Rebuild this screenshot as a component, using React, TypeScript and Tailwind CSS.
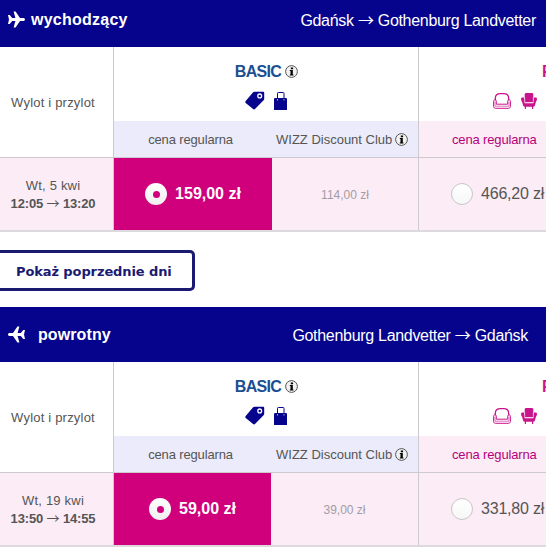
import React from "react";

interface Flight {
  title: string;
  from: string;
  to: string;
  day: string;
  departure: string;
  arrival: string;
  basicPrice: string;
  clubPrice: string;
  plusPrice: string;
}

const outbound: Flight = {
  title: "wychodzący",
  from: "Gdańsk",
  to: "Gothenburg Landvetter",
  day: "Wt, 5 kwi",
  departure: "12:05",
  arrival: "13:20",
  basicPrice: "159,00 zł",
  clubPrice: "114,00 zł",
  plusPrice: "466,20 zł",
};

const inbound: Flight = {
  title: "powrotny",
  from: "Gothenburg Landvetter",
  to: "Gdańsk",
  day: "Wt, 19 kwi",
  departure: "13:50",
  arrival: "14:55",
  basicPrice: "59,00 zł",
  clubPrice: "39,00 zł",
  plusPrice: "331,80 zł",
};

const PlaneIcon: React.FC<{ className?: string }> = ({ className = "" }) => (
  <svg viewBox="0 0 17 17" className={`h-[17px] w-[17px] shrink-0 fill-white ${className}`}>
    <path d="M0 4h1.700l2.500 3h3.200L5.600.4h2L12 7h3.100c1.300 0 1.900.7 1.900 1.500S16.400 10 15.100 10H12l-4.400 6.600h-2L7.400 10H4.200l-2.500 3H0l1-4.500z" />
  </svg>
);

const InfoIcon: React.FC<{ className?: string }> = ({ className = "" }) => (
  <svg viewBox="0 0 13 13" className={`h-[13px] w-[13px] shrink-0 ${className}`}>
    <circle cx="6.5" cy="6.5" r="5.9" fill="#f1f1f1" stroke="#555" strokeWidth="1" />
    <path d="M5.800 2.500h2.300v1.700H5.800zM4.800 5h3v4.500h.7v1.100H4.800V9.500h.7V6h-.7z" fill="#000" />
  </svg>
);

const TagIcon = () => (
  <svg viewBox="0 0 20 19" className="h-[19px] w-5 shrink-0">
    <path
      d="M9.500.8h8.400c.8 0 1.300.5 1.300 1.300v5.600c0 .6-.2 1.100-.6 1.500l-8.600 8.900c-.6.600-1.300.6-1.900 0L.7 12c-.6-.6-.6-1.400 0-2l7.200-8.400c.4-.5.9-.8 1.600-.8z"
      fill="#06038d"
    />
    <circle cx="14.700" cy="4.900" r="1.900" fill="none" stroke="#fff" strokeWidth="1.300" />
  </svg>
);

const BagIcon = () => (
  <svg viewBox="0 0 13 18" className="h-[18px] w-[13px] shrink-0">
    <path d="M3.500 8V1.300c0-.5.300-.8.800-.8h4.900c.5 0 .8.300.8.800V8" fill="none" stroke="#06038d" />
    <path d="M.6 6h11.800l.6 1v11H0V7z" fill="#06038d" />
    <path d="M3 7h1v1.500H3zM9.500 7h1v1.500h-1z" fill="#aaaadd" />
  </svg>
);

const SofaIcon = () => (
  <svg viewBox="0 0 18 16" className="h-4 w-[18px] shrink-0" fill="none" stroke="#c9158b">
    <path d="M2.300 7V5.500C2.300 2.500 4.500.7 7.500.7h3c3 0 5.200 1.800 5.200 4.800V7" strokeWidth="1.300" />
    <path d="M3.300 11.200V8.200C3.300 7.300 2.900 6.800 2 6.800S.6 7.400.6 8.300v5c0 1.300.8 2 2 2h12.800c1.200 0 2-.7 2-2v-5c0-.9-.5-1.500-1.400-1.500s-1.300.5-1.300 1.400v3z" strokeWidth="1" />
    <path d="M2 8.500v4.700h14V8.500" strokeWidth=".6" />
  </svg>
);

const ArmchairIcon = () => (
  <svg viewBox="0 0 16 16" className="h-4 w-4 shrink-0" fill="#c9158b">
    <path d="M5.200 0h5.600c.9 0 1.500.6 1.500 1.500V9H3.700V1.500C3.700.6 4.300 0 5.200 0z" />
    <path d="M1.400 4.500H3l1 5.300h8l1-5.300h1.600c.8 0 1.400.6 1.400 1.300 0 1.700-.7 2.200-1.300 3.700l-.7 2.800c-.3 1-.9 1.400-1.700 1.400H3.700c-.8 0-1.400-.4-1.700-1.400l-.7-2.800C.7 8 0 7.500 0 5.800c0-.7.600-1.300 1.400-1.300z" />
    <path d="M3.700 4.300v5.700h8.600V4.300" fill="none" stroke="#fff" strokeWidth=".5" />
    <path d="M3.800 13h1.200v3H3.800zM11 13h1.200v3H11z" />
  </svg>
);

const Arrow = () => <span className="font-['Noto_Sans_CJK_SC',sans-serif] font-normal leading-none">→</span>;

const Radio: React.FC<{ checked?: boolean }> = ({ checked }) =>
  checked ? (
    <span className="flex size-[22px] shrink-0 items-center justify-center rounded-full bg-linear-to-b from-white to-[#f0f0f0]">
      <span className="size-[7px] rounded-full bg-[#d0007d]" />
    </span>
  ) : (
    <span className="size-[22px] shrink-0 rounded-full border border-[#c8c5c8] bg-linear-to-b from-white to-[#f5f8f6]" />
  );

const FareTable: React.FC<{ flight: Flight; basicWidth: string }> = ({ flight, basicWidth }) => (
  <div className="border-b-2 border-[#dddadd] text-[13px] leading-[18px] text-[#555]">
    <div className="flex h-[111px] border-b border-[#cccacf]">
      <div className="flex w-[114px] shrink-0 items-center justify-center border-r border-[#cccacf] pr-[7px] pt-[2px] tracking-[0.2px]">
        Wylot i przylot
      </div>

      {/* Basic */}
      <div className="flex w-[305px] shrink-0 flex-col border-r border-[#cccacf]">
        <div className="flex h-[74px] flex-col items-center pt-[15px]">
          <div className="flex h-5 items-center gap-1 pl-[1px]">
            <span className="text-base font-bold tracking-[-0.7px] text-[#1a4f92]">BASIC</span>
            <InfoIcon className="mb-[1px]" />
          </div>
          <div className="mt-[9px] flex items-end gap-[9px] pr-[1px]">
            <TagIcon />
            <BagIcon />
          </div>
        </div>
        <div className="flex h-9 items-center bg-[#ebebfb] pt-[2px]">
          <span className="w-[153px] text-center tracking-[-0.15px]">cena regularna</span>
          <span className="flex items-center gap-[3px] pl-[9px]">
            WIZZ Discount Club
            <InfoIcon className="mb-[1px]" />
          </span>
        </div>
      </div>

      {/* Plus, runs past the right edge */}
      <div className="flex w-[305px] shrink-0 flex-col">
        <div className="h-[74px] pt-[15px]">
          <div className="h-5 pl-[123px] text-base font-bold leading-5 text-[#c9158b]">PLUS</div>
          <div className="mt-[11px] flex items-center gap-[10px] pl-[74px]">
            <SofaIcon />
            <ArmchairIcon />
          </div>
        </div>
        <div className="flex h-9 items-center bg-[#fcecf6] pl-[33px] pt-[2px] tracking-[-0.15px] text-[#b5007c]">
          cena regularna
        </div>
      </div>
    </div>

    <div className="flex h-[72px] bg-[#fcecf6]">
      <div className="flex w-[114px] shrink-0 flex-col items-center justify-center border-r border-[#cccacf] pr-[7px] pt-[2px]">
        <span className="h-[18px] tracking-[0.2px]">{flight.day}</span>
        <span className="h-[18px] font-bold tracking-[-0.15px]">
          {flight.departure} <Arrow /> {flight.arrival}
        </span>
      </div>
      <div className={`flex shrink-0 items-center justify-center gap-2 bg-[#d0007d] text-base font-bold text-white ${basicWidth}`}>
        <Radio checked />
        {flight.basicPrice}
      </div>
      <div className="flex flex-1 items-center justify-center border-r border-[#cccacf] pt-[2px] text-xs text-[#a39ca3]">
        {flight.clubPrice}
      </div>
      <div className="flex w-[127px] shrink-0 items-center gap-2 pl-8 text-base tracking-[-0.2px]">
        <Radio />
        {flight.plusPrice}
      </div>
    </div>
  </div>
);

export default function App() {
  return (
    <div className="h-[555px] w-[546px] overflow-hidden whitespace-nowrap bg-white font-['Liberation_Sans',Arial,sans-serif]">
      <header className="flex h-[47px] items-center bg-[#06038d] pb-[7px] pl-2 pr-[10px] text-base text-white">
        <PlaneIcon className="mb-[1px]" />
        <h2 className="ml-[6px] font-bold tracking-[0.25px]">{outbound.title}</h2>
        <span className="ml-auto h-6 pt-[1px] tracking-[-0.3px]">
          {outbound.from} <Arrow /> {outbound.to}
        </span>
      </header>
      <FareTable flight={outbound} basicWidth="w-[158px]" />

      <button className="mt-[18px] flex h-[41px] w-[195px] items-center rounded-r-[5px] border-3 border-l-0 border-[#1b1a72] pl-4 pt-[3px] font-['DejaVu_Sans',Verdana,sans-serif] text-[13px] font-bold tracking-[-0.1px] text-[#1b1a72]">
        Pokaż poprzednie dni
      </button>

      <header className="mt-4 flex h-[55px] items-center bg-[#06038d] pl-2 pr-[18px] text-base text-white">
        <PlaneIcon className="-scale-x-100" />
        <h2 className="ml-[13px] font-bold tracking-[0.1px]">{inbound.title}</h2>
        <span className="ml-auto h-6 pt-[1px] tracking-[-0.3px]">
          {inbound.from} <Arrow /> {inbound.to}
        </span>
      </header>
      <FareTable flight={inbound} basicWidth="w-[157px]" />
    </div>
  );
}
